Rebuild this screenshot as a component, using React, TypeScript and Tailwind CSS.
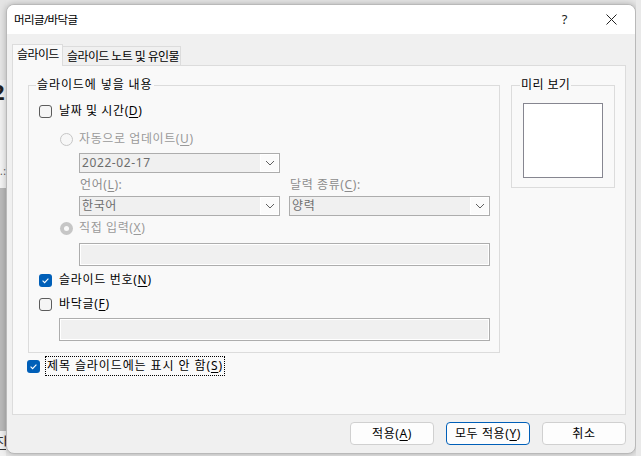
import type { ReactNode } from "react";

const FONT = "font-['Noto_Sans','Noto_Sans_CJK_KR',sans-serif]";

function Key({ k }: { k: string }) {
  return (
    <>
      (<span className="underline underline-offset-2">{k}</span>)
    </>
  );
}

function CheckBox({ checked }: { checked?: boolean }) {
  if (checked) {
    return (
      <span className="flex h-[13px] w-[13px] shrink-0 items-center justify-center rounded-[3px] bg-[#005fb8]">
        <svg width="9" height="9" viewBox="0 0 9 9">
          <path d="M1.6 4.7 L3.6 6.6 L7.4 2.6" stroke="#fff" strokeWidth="1.1" fill="none" />
        </svg>
      </span>
    );
  }
  return <span className="h-[13px] w-[13px] shrink-0 rounded-[3px] border border-[#5c5c5c] bg-[#f5f5f5]" />;
}

function Radio({ selected }: { selected?: boolean }) {
  if (selected) {
    return (
      <span className="flex h-[13px] w-[13px] shrink-0 items-center justify-center rounded-full bg-[#c6c6c6]">
        <span className="h-[5px] w-[5px] rounded-full bg-[#f9f9f9]" />
      </span>
    );
  }
  return <span className="h-[13px] w-[13px] shrink-0 rounded-full border border-[#c6c6c6] bg-[#f7f7f7]" />;
}

function Chevron() {
  return (
    <svg width="10" height="6" viewBox="0 0 10 6">
      <path d="M1 1 L5 5 L9 1" stroke="#606060" strokeWidth="1" fill="none" />
    </svg>
  );
}

function Combo({ value, width }: { value: string; width: string }) {
  return (
    <div className={`flex h-[20px] ${width} items-stretch border border-[#adadad] bg-[#f0f0f0]`}>
      <span className="flex-1 pl-[2px] leading-[18px] text-[#6d6d6d]">{value}</span>
      <span className="flex w-[19px] items-center justify-center border border-white bg-[#fbfbfb]">
        <Chevron />
      </span>
    </div>
  );
}

function TextBox({ width }: { width: string }) {
  return <div className={`h-[23px] ${width} border border-[#adadad] bg-[#f0f0f0] shadow-[inset_0_0_0_1px_#fff]`} />;
}

function Button({ children, primary }: { children: ReactNode; primary?: boolean }) {
  return (
    <button
      type="button"
      className={`h-[23px] w-[84px] rounded-[4px] border bg-[#fdfdfd] text-[12px] leading-[21px] tracking-[0.6px] text-black ${
        primary ? "border-[#005fb8]" : "border-[#d0d0d0]"
      }`}
    >
      {children}
    </button>
  );
}

export default function App() {
  return (
    <div className={`flex h-[456px] w-[641px] overflow-hidden bg-[#e6e6e6] text-[12px] tracking-[0.6px] ${FONT}`}>
      {/* background window edge */}
      <div className="flex w-[6px] shrink-0 flex-col">
        <div className="h-[80px] bg-[#e4e4e4]" />
        <div className="h-[22px] overflow-hidden bg-[#f0f0f0]">
          <span className="-ml-[8px] block text-[22px] font-bold leading-[22px] text-[#222]">2</span>
        </div>
        <div className="h-[48px] bg-[#f0f0f0]" />
        <div className="h-[38px] overflow-hidden bg-[#f3f3f3] pt-[14px] text-[10px] text-[#555]">.:</div>
        <div className="h-[243px] bg-[#b9b9b9]" />
        <div className="flex-1 overflow-hidden bg-[#f0f0f0]">
          <span className="-ml-[6px] block pt-[2px] text-[16px] leading-[20px] text-[#333]">잔</span>
        </div>
      </div>

      {/* dialog */}
      <div className="mt-[4px] flex h-[450px] w-[630px] shrink-0 flex-col overflow-hidden rounded-[8px] border border-[#b9b9b9] bg-[#f0f0f0] shadow-[0_0_6px_rgba(0,0,0,0.25)]">
        <div className="flex h-[29px] shrink-0 items-center bg-white pl-[7px]">
          <span className="flex-1 text-[11.5px] tracking-[-0.6px] text-black">머리글/바닥글</span>
          <span className="mr-[38px] text-[13px] text-[#222]">?</span>
          <svg width="11" height="11" viewBox="0 0 11 11" className="mr-[18px]">
            <path d="M0.5 0.5 L10.5 10.5 M10.5 0.5 L0.5 10.5" stroke="#222" strokeWidth="1" />
          </svg>
        </div>

        <div className="flex flex-1 flex-col px-[5px] pt-[10px]">
          {/* tabs */}
          <div className="flex h-[22px] items-end tracking-[-0.6px]">
            <div className="relative z-10 h-[22px] w-[51px] border-x border-t border-[#dcdcdc] bg-[#f9f9f9] pl-[4px] leading-[20px] text-black">
              슬라이드
            </div>
            <div className="h-[20px] w-[118px] border-r border-t border-[#dcdcdc] bg-[#f0f0f0] pl-[4px] leading-[19px] text-black">
              슬라이드 노트 및 유인물
            </div>
          </div>

          {/* tab panel */}
          <div className="-mt-[1px] flex h-[350px] w-[614px] flex-col border border-[#dcdcdc] bg-[#f9f9f9] pl-[15px] pt-[19px]">
            <div className="flex gap-[11px]">
              {/* content group */}
              <div className="relative flex h-[268px] w-[472px] flex-col border border-[#dcdcdc]">
                <span className="absolute left-[7px] -top-[9px] bg-[#f9f9f9] px-[1px] leading-[16px] tracking-[0.9px] text-black">
                  슬라이드에 넣을 내용
                </span>

                <div className="ml-[10px] mt-[17px] flex h-[16px] items-center gap-[7px] text-black">
                  <CheckBox />
                  <span>
                    날짜 및 시간<Key k="D" />
                  </span>
                </div>

                <div className="ml-[31px] mt-[12px] flex h-[16px] items-center gap-[6px] text-[#9a9a9a]">
                  <Radio />
                  <span>
                    자동으로 업데이트<Key k="U" />
                  </span>
                </div>

                <div className="ml-[50px] mt-[6px]">
                  <Combo value="2022-02-17" width="w-[201px]" />
                </div>

                <div className="ml-[51px] mt-[5px] flex h-[14px] items-center text-[#8c8c8c]">
                  <span className="w-[210px]">
                    언어<Key k="L" />:
                  </span>
                  <span>
                    달력 종류<Key k="C" />:
                  </span>
                </div>

                <div className="ml-[50px] mt-[4px] flex gap-[9px]">
                  <Combo value="한국어" width="w-[201px]" />
                  <Combo value="양력" width="w-[201px]" />
                </div>

                <div className="ml-[31px] mt-[4px] flex h-[16px] items-center gap-[6px] text-[#9a9a9a]">
                  <Radio selected />
                  <span>
                    직접 입력<Key k="X" />
                  </span>
                </div>

                <div className="ml-[50px] mt-[7px]">
                  <TextBox width="w-[411px]" />
                </div>

                <div className="ml-[10px] mt-[6px] flex h-[16px] items-center gap-[7px] tracking-[0.7px] text-black">
                  <CheckBox checked />
                  <span>
                    슬라이드 번호<Key k="N" />
                  </span>
                </div>

                <div className="ml-[10px] mt-[8px] flex h-[16px] items-center gap-[7px] tracking-[0.7px] text-black">
                  <CheckBox />
                  <span>
                    바닥글<Key k="F" />
                  </span>
                </div>

                <div className="ml-[30px] mt-[6px]">
                  <TextBox width="w-[431px]" />
                </div>
              </div>

              {/* preview group */}
              <div className="relative h-[103px] w-[104px] border border-[#dcdcdc] pl-[11px] pt-[17px]">
                <span className="absolute left-[8px] -top-[9px] bg-[#f9f9f9] px-[1px] leading-[16px] tracking-[0.4px] text-black">
                  미리 보기
                </span>
                <div className="h-[75px] w-[80px] border border-[#868690] bg-white" />
              </div>
            </div>

            <div className="-ml-[1px] mt-[3px] flex h-[20px] items-center gap-[5px] tracking-[0.9px] text-black">
              <CheckBox checked />
              <span className="border border-dotted border-black px-[1px] leading-[18px]">
                제목 슬라이드에는 표시 안 함<Key k="S" />
              </span>
            </div>
          </div>

          {/* buttons */}
          <div className="mr-[4px] mt-[7px] flex justify-end gap-[12px]">
            <Button>
              적용<Key k="A" />
            </Button>
            <Button primary>
              모두 적용<Key k="Y" />
            </Button>
            <Button>취소</Button>
          </div>
        </div>
      </div>

      <div className="flex-1 bg-[#e9e9e9]" />
    </div>
  );
}
